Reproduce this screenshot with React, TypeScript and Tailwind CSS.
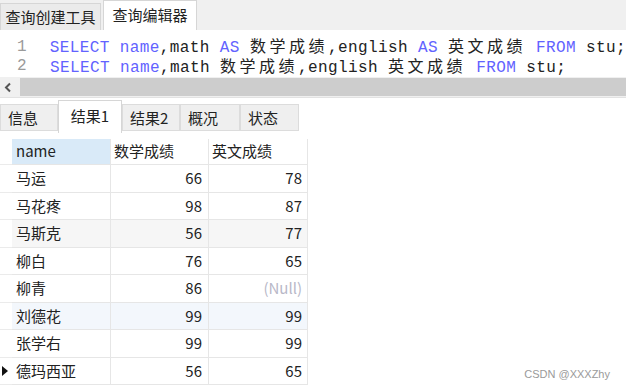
import React from 'react';

interface Row {
  name: string;
  math: number;
  english: number | null;
  bg?: string;
  current?: boolean;
}

const rows: Row[] = [
  { name: '马运', math: 66, english: 78 },
  { name: '马花疼', math: 98, english: 87 },
  { name: '马斯克', math: 56, english: 77, bg: 'bg-[#f6f6f6]' },
  { name: '柳白', math: 76, english: 65 },
  { name: '柳青', math: 86, english: null },
  { name: '刘德花', math: 99, english: 99, bg: 'bg-[#f3f7fc]' },
  { name: '张学右', math: 99, english: 99 },
  { name: '德玛西亚', math: 56, english: 65, current: true },
];

const Kw: React.FC<{ children: React.ReactNode }> = ({ children }) => (
  <span className="text-[#6262ff]">{children}</span>
);

const Cjk: React.FC<{ children: React.ReactNode }> = ({ children }) => (
  <span className="font-['Noto_Sans_CJK_SC',sans-serif] text-[16px] leading-[19px] tracking-[3.5px] text-[#222]">{children}</span>
);

const App: React.FC = () => {
  const ui = "font-['Noto_Sans_CJK_SC','Noto_Sans',sans-serif]";
  const bottomTabs = ['信息', '结果1', '结果2', '概况', '状态'];
  const tabWidths = ['w-[58px]', 'w-[64px]', 'w-[58px]', 'w-[60px]', 'w-[59px]'];

  return (
    <div className={`relative w-[626px] h-[392px] bg-white overflow-hidden text-[#222] ${ui}`}>
      {/* top tabs */}
      <div className="h-[30px] bg-[#f0f0f0] flex items-end">
        <div className="w-[101px] h-[27px] bg-[#ebebeb] border border-b-0 border-[#d6d6d6] flex items-center justify-center text-[15px] leading-none pb-[2px]">
          查询创建工具
        </div>
        <div className="ml-[2px] w-[94px] h-[30px] bg-white border border-b-0 border-[#d6d6d6] flex items-center justify-center text-[15px] leading-none pb-[2px]">
          查询编辑器
        </div>
      </div>

      {/* editor */}
      <div className="h-[47px] pt-[7px] font-['Liberation_Mono',monospace] text-[16px] tracking-[0.4px] leading-[19px] whitespace-pre">
        <div className="flex h-[20px] items-center">
          <span className="w-[50px] pl-[17px] text-[#9a9a9a]">1</span>
          <span>
            <Kw>SELECT</Kw> <Kw>name</Kw>,math <Kw>AS</Kw> <Cjk>数学成绩</Cjk>,english <Kw>AS</Kw> <Cjk>英文成绩</Cjk> <Kw>FROM</Kw> stu;
          </span>
        </div>
        <div className="flex h-[19px] items-center">
          <span className="w-[50px] pl-[17px] text-[#9a9a9a]">2</span>
          <span>
            <Kw>SELECT</Kw> <Kw>name</Kw>,math <Cjk>数学成绩</Cjk>,english <Cjk>英文成绩</Cjk> <Kw>FROM</Kw> stu;
          </span>
        </div>
      </div>

      {/* horizontal scrollbar */}
      <div className="h-[21px] bg-[#f0f0f0] flex items-center border-b border-[#e2e2e2]">
        <svg width="20" height="19" viewBox="0 0 20 19" className="shrink-0">
          <path d="M10 5.5 L6 9.5 L10 13.5" fill="none" stroke="#555" strokeWidth="2" />
        </svg>
        <div className="flex-1 h-[18px] bg-[#cdcdcd]" />
      </div>

      {/* result tabs */}
      <div className="h-[35px] flex items-start pt-[2px]">
        {bottomTabs.map((t, i) =>
          i === 1 ? (
            <div
              key={t}
              className={`${tabWidths[i]} h-[33px] bg-white border border-b-0 border-[#d6d6d6] flex items-center justify-center text-[15px] leading-none pb-[4px]`}
            >
              {t}
            </div>
          ) : (
            <div
              key={t}
              className={`${tabWidths[i]} mt-[4px] h-[27px] bg-[#efefef] border border-[#dcdcdc] flex items-center pl-[7px] text-[15px] leading-none`}
            >
              {t}
            </div>
          )
        )}
      </div>

      {/* grid */}
      <div className="mt-[6px] w-[308px] text-[15px]">
        <div className="grid grid-cols-[12px_99px_98px_99px] h-[26px]">
          <div className="border-b border-[#ebebeb]" />
          <div className="bg-[#d9eaf8] border-r border-b border-[#e6e6e6] flex items-center pl-[4px]">name</div>
          <div className="border-r border-b border-[#e6e6e6] flex items-center pl-[3px]">数学成绩</div>
          <div className="border-r border-b border-[#e6e6e6] flex items-center pl-[3px]">英文成绩</div>
        </div>
        {rows.map((r) => (
          <div key={r.name} className="grid grid-cols-[12px_99px_98px_99px] h-[27.5px]">
            <div className="border-b border-[#ebebeb] flex items-center">
              {r.current && (
                <svg width="8" height="12" viewBox="0 0 8 12" className="ml-[1px]">
                  <path d="M1 1 L7 6 L1 11 Z" fill="#111" />
                </svg>
              )}
            </div>
            <div className={`${r.bg ?? ''} border-r border-b border-[#e6e6e6] flex items-center pl-[4px]`}>{r.name}</div>
            <div className={`${r.bg ?? ''} border-r border-b border-[#e6e6e6] flex items-center justify-end pr-[6px]`}>{r.math}</div>
            <div className={`${r.bg ?? ''} border-r border-b border-[#e6e6e6] flex items-center justify-end pr-[5px]`}>
              {r.english === null ? <span className="text-[#b8b8c8]">(Null)</span> : r.english}
            </div>
          </div>
        ))}
      </div>

      <div className="absolute right-[16px] bottom-[10px] text-[11px] text-[#9a9a9a] font-['Liberation_Sans',sans-serif]">
        CSDN @XXXZhy
      </div>
    </div>
  );
};

export default App;
